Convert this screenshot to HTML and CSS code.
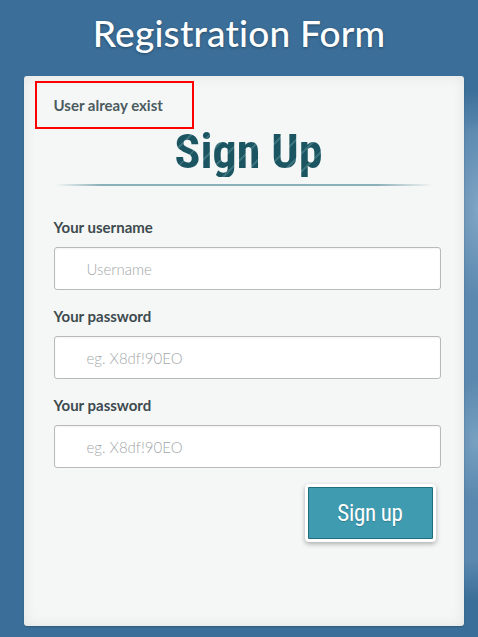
FILE: index.html
```html
<!DOCTYPE html>
<html>
<head>
<meta charset="utf-8">
<link rel="stylesheet" href="styles.css">
</head>
<body>
<div class="page">
  <h1 class="title">Registration Form</h1>
  <div class="card">
    <div class="alert">User alreay exist</div>
    <h2 class="signup">Sign Up</h2>
    <div class="rule"></div>
    <form class="form">
      <label class="label">Your username</label>
      <input class="input" type="text" placeholder="Username">
      <label class="label">Your password</label>
      <input class="input" type="password" placeholder="eg. X8df!90EO">
      <label class="label">Your password</label>
      <input class="input" type="password" placeholder="eg. X8df!90EO">
      <div class="actions">
        <button class="btn" type="button">Sign up</button>
      </div>
    </form>
  </div>
</div>
</body>
</html>
```
FILE: styles.css
```css
html, body {
  margin: 0;
  padding: 0;
}
body {
  width: 478px;
  height: 637px;
  overflow: hidden;
  background-color: #3b6f99;
  background-image:
    radial-gradient(ellipse 30px 90px at 478px 210px, rgba(160,190,215,0.55), rgba(160,190,215,0) 100%),
    radial-gradient(ellipse 25px 60px at 475px 440px, rgba(150,185,210,0.5), rgba(150,185,210,0) 100%),
    linear-gradient(to bottom, rgba(120,160,195,0) 90px, rgba(120,160,195,0.5) 130px, rgba(120,160,195,0.5) 560px, rgba(120,160,195,0) 600px);
  background-size: auto, auto, 20px 637px;
  background-position: 0 0, 0 0, 458px 0;
  background-repeat: no-repeat;
  font-family: Lato, "Open Sans", sans-serif;
}
.page {
  display: flex;
  flex-direction: column;
  align-items: center;
}
.title {
  margin: 11px 0 0;
  height: 65px;
  font-family: Lato, "Open Sans", sans-serif;
  font-weight: 500;
  font-size: 37px;
  letter-spacing: 0.2px;
  color: #ffffff;
  text-shadow: 0 1px 3px rgba(0,0,0,0.35);
  line-height: 44px;
}
.card {
  box-sizing: border-box;
  width: 440px;
  height: 550px;
  margin-left: 9px;
  background: #f5f6f6;
  border-radius: 3px;
  box-shadow: inset 0 0 14px rgba(0,0,0,0.08), 0 1px 2px rgba(0,0,0,0.2);
  padding: 5px 22px 0 11px;
}
.alert {
  box-sizing: border-box;
  width: 159px;
  height: 48px;
  border: 2px solid #ff0000;
  padding: 13px 0 0 17px;
  font-weight: 700;
  font-size: 15px;
  color: #4b5b60;
}
.signup {
  margin: -2px 0 0;
  text-align: center;
  font-family: "Liberation Sans Narrow", "Roboto Condensed", Roboto, sans-serif;
  font-weight: 700;
  font-size: 48px;
  line-height: 50px;
  padding-left: 21px;
  color: #1f5a66;
  background: repeating-linear-gradient(135deg, #1b5561 0 11px, #3a727c 11px 13px);
  -webkit-background-clip: text;
  background-clip: text;
  -webkit-text-fill-color: transparent;
}
.rule {
  margin: 7px 0 0 21px;
  height: 2px;
  width: 377px;
  background: linear-gradient(to right, rgba(138,176,184,0) 0%, #8ab0b8 12%, #8ab0b8 85%, rgba(138,176,184,0) 100%);
}
.form {
  display: flex;
  flex-direction: column;
  padding-left: 19px;
  margin-top: 32px;
}
.label {
  font-weight: 700;
  font-size: 15px;
  color: #3d4b4f;
  height: 19px;
  line-height: 19px;
}
.input {
  box-sizing: border-box;
  width: 387px;
  height: 43px;
  margin: 10px 0 17px;
  border: 1px solid #b9b9b9;
  border-radius: 3px;
  background: #ffffff;
  padding: 0 0 0 32px;
  font-family: Lato, "Open Sans", sans-serif;
  font-weight: 300;
  font-size: 15px;
  color: #333;
  box-shadow: inset 0 1px 2px rgba(0,0,0,0.05);
}
.input::placeholder {
  color: #a3a8aa;
}
.actions {
  display: flex;
  justify-content: flex-end;
  margin-top: -1px;
  padding-right: 6px;
}
.btn {
  box-sizing: border-box;
  width: 131px;
  height: 58px;
  border: 3px solid #ffffff;
  border-radius: 4px;
  padding: 0;
  background: #3e9bb0;
  box-shadow: inset 0 0 0 1px #1f6c7c, 0 2px 5px rgba(0,0,0,0.3);
  color: #ffffff;
  font-family: "Liberation Sans Narrow", "Roboto Condensed", Roboto, sans-serif;
  font-size: 23px;
  letter-spacing: -0.3px;
  text-shadow: 0 1px 1px rgba(0,0,0,0.2);
}
```
